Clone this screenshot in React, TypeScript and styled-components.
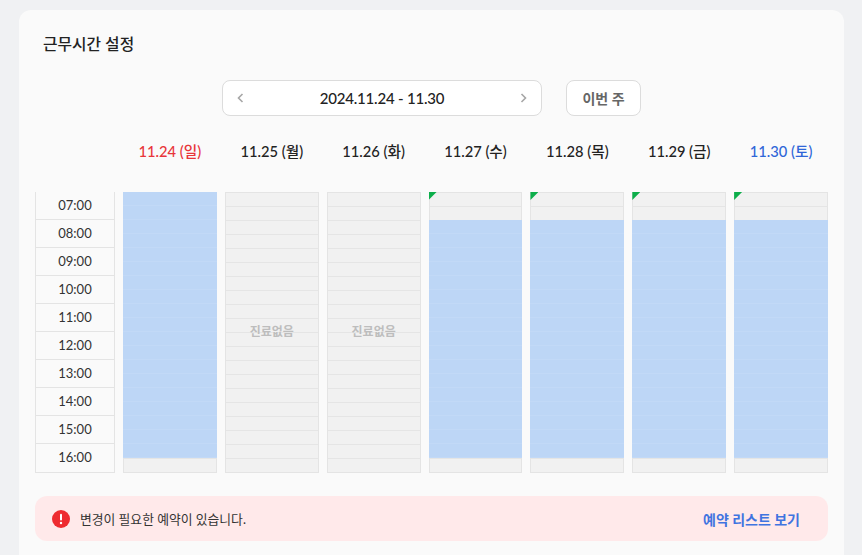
import React from 'react';
import styled, { createGlobalStyle } from 'styled-components';

const Global = createGlobalStyle`
  html, body { margin: 0; padding: 0; height: 555px; overflow: hidden; background: #f0f1f3; }
  body { font-family: Lato, "Noto Sans CJK KR", sans-serif; }
  * { box-sizing: border-box; }
`;

const Page = styled.div`
  width: 862px;
  height: 555px;
  padding: 10px 18px 0 19px;
  overflow: hidden;
`;
const Card = styled.section`
  height: 560px;
  background: #fafafa;
  border-radius: 12px;
  padding: 0 16px;
`;
const Title = styled.h2`
  margin: 0;
  padding: 24px 8px 0;
  height: 70px;
  font-size: 15.8px;
  line-height: 20px;
  font-weight: 500;
  color: #222;
`;
const Toolbar = styled.div`
  display: flex;
  justify-content: center;
  gap: 24px;
  height: 36px;
`;
const WeekPicker = styled.div`
  width: 320px;
  height: 36px;
  display: flex;
  align-items: center;
  justify-content: space-between;
  padding: 0 12px;
  background: #fff;
  border: 1px solid #dcdcdc;
  border-radius: 8px;
  font-size: 15px;
  font-weight: 500;
  letter-spacing: -0.2px;
  color: #222;
`;
const Chevron = styled.svg`
  width: 12px;
  height: 12px;
  fill: none;
  stroke: #a6a6a6;
  stroke-width: 1.6;
`;
const ThisWeek = styled.button`
  width: 75px;
  height: 36px;
  padding: 0;
  background: #fff;
  border: 1px solid #dcdcdc;
  border-radius: 8px;
  font-family: inherit;
  font-size: 14px;
  font-weight: 600;
  color: #666;
`;
const DayHeader = styled.div`
  display: grid;
  grid-template-columns: 80px repeat(7, 1fr);
  column-gap: 8px;
  height: 76px;
  padding-top: 25px;
`;
const DayLabel = styled.div<{ $tone: 'sun' | 'sat' | 'week' }>`
  text-align: center;
  font-size: 14.7px;
  line-height: 20px;
  font-weight: 500;
  color: ${(p) => (p.$tone === 'sun' ? '#e8353a' : p.$tone === 'sat' ? '#2f66d8' : '#222')};
`;
const Schedule = styled.div`
  display: grid;
  grid-template-columns: 80px repeat(7, 1fr);
  column-gap: 8px;
  height: 280px;
`;
const TimeColumn = styled.div`
  border: 1px solid #e4e4e4;
  border-top: 0;
  display: flex;
  flex-direction: column;
`;
const TimeCell = styled.div`
  height: 28px;
  display: flex;
  align-items: center;
  justify-content: center;
  padding-bottom: 2px;
  font-size: 13px;
  color: #333;
  border-bottom: 1px solid #e4e4e4;
  &:last-child { border-bottom: 0; }
`;
const DayColumn = styled.div`
  position: relative;
  display: flex;
  flex-direction: column;
  background-color: #f1f1f1;
  background-image: repeating-linear-gradient(to bottom, transparent 0 13px, #e5e5e5 13px 14px);
  background-origin: padding-box;
  border: 1px solid #e4e4e4;
`;
const Spacer = styled.div`
  height: 27px;
  flex: none;
`;
const Booked = styled.div<{ $h: number; $top?: boolean }>`
  height: ${(p) => p.$h}px;
  flex: none;
  margin: ${(p) => (p.$top ? '-1px' : '0')} -1px 0;
  background-color: #bdd6f6;
  background-image: repeating-linear-gradient(to bottom, transparent 0 13px, #c2d9f7 13px 14px);
`;
const Corner = styled.span`
  position: absolute;
  top: -1px;
  left: -1px;
  width: 8px;
  height: 8px;
  background: #0cae4a;
  clip-path: polygon(0 0, 100% 0, 0 100%);
`;
const Empty = styled.span`
  position: absolute;
  inset: 0 0 4px;
  display: flex;
  align-items: center;
  justify-content: center;
  font-size: 12px;
  font-weight: 700;
  color: #bdbdbd;
`;
const Alert = styled.div`
  margin-top: 24px;
  height: 45px;
  display: flex;
  align-items: center;
  justify-content: space-between;
  padding: 0 28px 0 17px;
  background: #ffe9ea;
  border-radius: 12px;
`;
const AlertMessage = styled.div`
  display: flex;
  align-items: center;
  gap: 10px;
  font-size: 12.8px;
  color: #333;
`;
const AlertLink = styled.a`
  font-size: 14px;
  font-weight: 700;
  color: #3f74e0;
`;

const times = ['07:00', '08:00', '09:00', '10:00', '11:00', '12:00', '13:00', '14:00', '15:00', '16:00'];
type Tone = 'sun' | 'sat' | 'week';
const days: { label: string; tone: Tone; kind: 'full' | 'none' | 'flag' }[] = [
  { label: '11.24 (일)', tone: 'sun', kind: 'full' },
  { label: '11.25 (월)', tone: 'week', kind: 'none' },
  { label: '11.26 (화)', tone: 'week', kind: 'none' },
  { label: '11.27 (수)', tone: 'week', kind: 'flag' },
  { label: '11.28 (목)', tone: 'week', kind: 'flag' },
  { label: '11.29 (금)', tone: 'week', kind: 'flag' },
  { label: '11.30 (토)', tone: 'sat', kind: 'flag' },
];

export default function App() {
  return (
    <Page>
      <Global />
      <Card>
        <Title>근무시간 설정</Title>
        <Toolbar>
          <WeekPicker>
            <Chevron viewBox="0 0 12 12"><path d="M7.5 2 L3.5 6 L7.5 10" /></Chevron>
            <span>2024.11.24 - 11.30</span>
            <Chevron viewBox="0 0 12 12"><path d="M4.5 2 L8.5 6 L4.5 10" /></Chevron>
          </WeekPicker>
          <ThisWeek>이번 주</ThisWeek>
        </Toolbar>
        <DayHeader>
          <div />
          {days.map((d) => (
            <DayLabel key={d.label} $tone={d.tone}>{d.label}</DayLabel>
          ))}
        </DayHeader>
        <Schedule>
          <TimeColumn>
            {times.map((t) => <TimeCell key={t}>{t}</TimeCell>)}
          </TimeColumn>
          {days.map((d) => (
            <DayColumn key={d.label}>
              {d.kind === 'full' && <Booked $h={266} $top />}
              {d.kind === 'flag' && (
                <>
                  <Spacer />
                  <Booked $h={238} />
                  <Corner />
                </>
              )}
              {d.kind === 'none' && <Empty>진료없음</Empty>}
            </DayColumn>
          ))}
        </Schedule>
        <Alert>
          <AlertMessage>
            <svg width="18" height="18" viewBox="0 0 18 18">
              <circle cx="9" cy="9" r="9" fill="#ee2b30" />
              <rect x="8" y="3.8" width="2" height="6.6" rx="1" fill="#fff" />
              <circle cx="9" cy="13" r="1.2" fill="#fff" />
            </svg>
            <span>변경이 필요한 예약이 있습니다.</span>
          </AlertMessage>
          <AlertLink>예약 리스트 보기</AlertLink>
        </Alert>
      </Card>
    </Page>
  );
}
